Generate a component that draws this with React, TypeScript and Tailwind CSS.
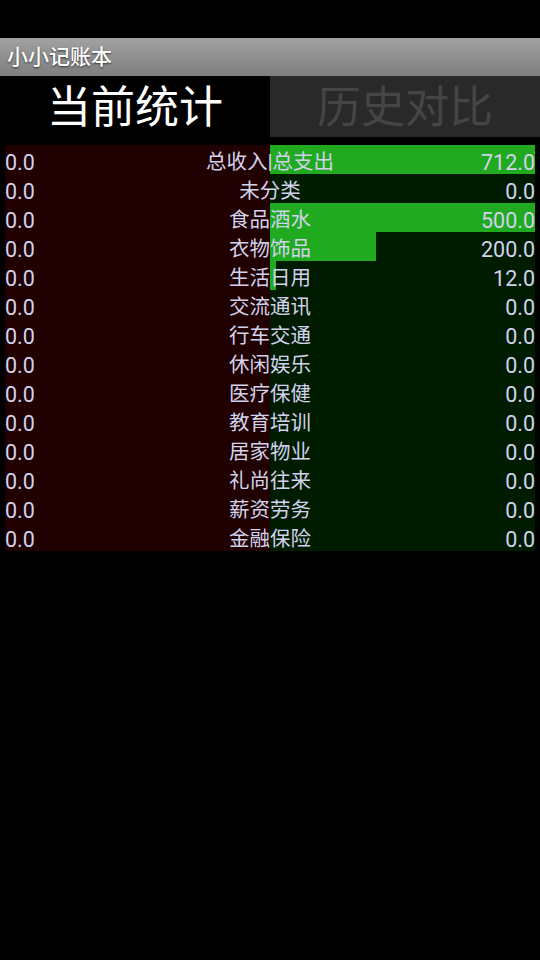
import React from 'react';

type Row = { income: string; label: string; spend: number };

const rows: Row[] = [
  { income: '0.0', label: '总收入|总支出', spend: 712 },
  { income: '0.0', label: '未分类', spend: 0 },
  { income: '0.0', label: '食品酒水', spend: 500 },
  { income: '0.0', label: '衣物饰品', spend: 200 },
  { income: '0.0', label: '生活日用', spend: 12 },
  { income: '0.0', label: '交流通讯', spend: 0 },
  { income: '0.0', label: '行车交通', spend: 0 },
  { income: '0.0', label: '休闲娱乐', spend: 0 },
  { income: '0.0', label: '医疗保健', spend: 0 },
  { income: '0.0', label: '教育培训', spend: 0 },
  { income: '0.0', label: '居家物业', spend: 0 },
  { income: '0.0', label: '礼尚往来', spend: 0 },
  { income: '0.0', label: '薪资劳务', spend: 0 },
  { income: '0.0', label: '金融保险', spend: 0 },
];

const font = { fontFamily: 'Roboto, "Noto Sans CJK SC", sans-serif' };

const App: React.FC = () => {
  // categories are scaled against the biggest one, the total row against itself
  const maxCat = Math.max(...rows.slice(1).map((r) => r.spend));

  return (
    <div className="w-[540px] h-[960px] bg-black" style={font}>
      <div className="h-[38px]" />
      <div className="h-[38px] flex items-center px-[7px] bg-gradient-to-b from-[#a2a2a2] to-[#7e7e7e]">
        <span className="text-white text-[21px] leading-none font-medium [text-shadow:0_1px_2px_#333]">小小记账本</span>
      </div>

      <div className="grid grid-cols-2 h-[61px]">
        <div className="flex items-center justify-center pt-[2px] bg-black text-white text-[44px] leading-none">当前统计</div>
        <div className="flex items-center justify-center pt-[2px] bg-[#292929] text-[#454545] text-[44px] leading-none">历史对比</div>
      </div>

      <div className="mx-[5px] mt-[8px] w-[530px]">
        {rows.map((r, i) => {
          const pct = r.spend === 0 ? 0 : i === 0 ? 100 : (r.spend / maxCat) * 100;
          return (
            <div key={i} className="relative h-[29px] leading-[29px] text-[#d2d2ec]">
              <div className="grid grid-cols-2 h-full">
                <div className="bg-[#200000]" />
                <div className="bg-[#001c00]">
                  <div className="h-full bg-[#20aa20]" style={{ width: `${pct}%` }} />
                </div>
              </div>
              <div className="absolute inset-0 pt-[3px] grid grid-cols-[1fr_auto_1fr] items-center">
                <span className="text-[21.5px]">{r.income}</span>
                <span className="text-[20.5px]">{r.label}</span>
                <span className="text-[21.5px] text-right">{r.spend.toFixed(1)}</span>
              </div>
            </div>
          );
        })}
      </div>
    </div>
  );
};

export default App;
